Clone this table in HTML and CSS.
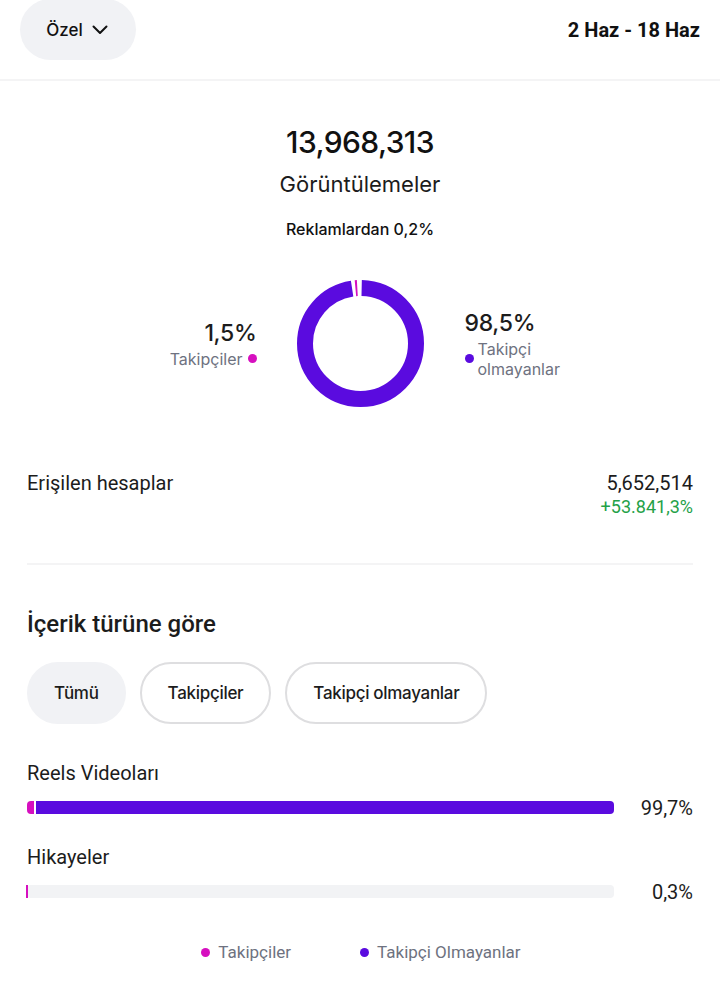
FILE: index.html
```html
<!DOCTYPE html>
<html lang="tr">
<head>
<meta charset="utf-8">
<link rel="stylesheet" href="styles.css">
</head>
<body>
<header class="topbar">
  <button class="range-pill">Özel
    <svg class="chev" width="16" height="10" viewBox="0 0 16 10"><path d="M1.5 1.5 L8 8 L14.5 1.5" fill="none" stroke="#111" stroke-width="2" stroke-linecap="round" stroke-linejoin="round"/></svg>
  </button>
  <div class="date-range">2 Haz - 18 Haz</div>
</header>

<main class="content">
  <section class="summary">
    <div class="big-number">13,968,313</div>
    <div class="big-label">Görüntülemeler</div>
    <div class="ads-note">Reklamlardan 0,2%</div>
  </section>

  <section class="donut-row">
    <div class="donut-side left">
      <div class="pct">1,5%</div>
      <div class="legend-line">Takipçiler <span class="dot pink"></span></div>
    </div>
    <svg class="donut" width="127" height="127" viewBox="0 0 127 127">
      <g transform="rotate(-90 63.5 63.5)">
        <circle cx="63.5" cy="63.5" r="55.5" fill="none" stroke="#5a0bdf" stroke-width="16" stroke-dasharray="338.5 1000" stroke-dashoffset="-1.2"/>
        <circle cx="63.5" cy="63.5" r="55.5" fill="none" stroke="#d60fbf" stroke-width="16" stroke-dasharray="1.9 1000" stroke-dashoffset="-343.0"/>
      </g>
    </svg>
    <div class="donut-side right">
      <div class="pct">98,5%</div>
      <div class="legend-line"><span class="dot purple"></span><span>Takipçi<br>olmayanlar</span></div>
    </div>
  </section>

  <section class="reach">
    <div class="reach-label">Erişilen hesaplar</div>
    <div class="reach-values">
      <div class="reach-num">5,652,514</div>
      <div class="reach-delta">+53.841,3%</div>
    </div>
  </section>

  <hr class="divider">

  <h2 class="section-title">İçerik türüne göre</h2>

  <div class="chips">
    <button class="chip active">Tümü</button>
    <button class="chip">Takipçiler</button>
    <button class="chip">Takipçi olmayanlar</button>
  </div>

  <section class="bars">
    <div class="bar-item">
      <div class="bar-name">Reels Videoları</div>
      <div class="bar-row">
        <div class="track">
          <div class="seg seg-pink" style="width:7px"></div>
          <div class="seg seg-purple" style="flex:1"></div>
        </div>
        <div class="bar-val">99,7%</div>
      </div>
    </div>
    <div class="bar-item">
      <div class="bar-name">Hikayeler</div>
      <div class="bar-row">
        <div class="track empty">
          <div class="seg seg-thin"></div>
        </div>
        <div class="bar-val">0,3%</div>
      </div>
    </div>
  </section>

  <div class="legend">
    <span class="legend-item"><span class="dot pink"></span>Takipçiler</span>
    <span class="legend-item"><span class="dot purple"></span>Takipçi Olmayanlar</span>
  </div>
</main>
</body>
</html>
```

FILE: styles.css
```css
* { box-sizing: border-box; }
html, body { margin: 0; padding: 0; background: #fff; }
body {
  font-family: Roboto, "Liberation Sans", sans-serif;
  color: #1c1c1c;
  width: 720px;
}

.topbar {
  height: 81px;
  border-bottom: 2px solid #f4f4f5;
  display: flex;
  justify-content: space-between;
  align-items: flex-start;
  padding: 0 20px 0 20px;
}
.range-pill {
  margin-top: -1px;
  width: 116px;
  height: 61px;
  border: none;
  border-radius: 31px;
  background: #f1f2f5;
  font-family: Inter, sans-serif;
  font-size: 17px;
  font-weight: 500;
  color: #111;
  display: flex;
  align-items: center;
  justify-content: center;
  gap: 9px;
  padding: 0 2px 0 0;
}
.chev { display: block; margin-top: 1px; }
.date-range {
  margin-top: 18px;
  font-family: Roboto, sans-serif;
  font-weight: 700;
  font-size: 20px;
  color: #111;
}

.content { padding: 0 27px; }

.summary { text-align: center; padding-top: 43px; }
.big-number {
  font-family: Inter, sans-serif;
  font-size: 30px;
  font-weight: 500;
  letter-spacing: -0.6px;
  line-height: 36px;
  color: #111;
}
.big-label {
  font-family: Inter, sans-serif;
  font-size: 22px;
  font-weight: 400;
  line-height: 30px;
  margin-top: 9px;
  color: #1c1c1c;
}
.ads-note {
  font-family: Inter, sans-serif;
  font-size: 16px;
  font-weight: 500;
  line-height: 22px;
  margin-top: 19px;
  color: #111;
}

.donut-row {
  margin-top: 40px;
  display: grid;
  grid-template-columns: 1fr auto 1fr;
  column-gap: 41px;
  align-items: center;
}
.donut { display: block; }
.donut-side { font-family: Inter, sans-serif; }
.donut-side.left { text-align: right; justify-self: end; margin-right: -1px; }
.donut-side.right { justify-self: start; margin-top: 0; }
.pct {
  font-size: 23px;
  font-weight: 500;
  color: #1c1c1c;
  line-height: 28px;
  letter-spacing: -0.3px;
}
.legend-line {
  font-size: 16px;
  color: #6e7280;
  line-height: 20px;
  display: flex;
  align-items: center;
  gap: 5px;
  margin-top: 2px;
}
.left .legend-line { justify-content: flex-end; }
.right .legend-line { gap: 4px; }
.dot {
  display: inline-block;
  width: 9px;
  height: 9px;
  border-radius: 50%;
  flex: none;
}
.dot.pink { background: #d60fbf; }
.dot.purple { background: #5a0bdf; }

.reach {
  margin-top: 63px;
  display: flex;
  justify-content: space-between;
  align-items: flex-start;
}
.reach-label { font-size: 20px; line-height: 26px; color: #1c1c1c; }
.reach-values { text-align: right; }
.reach-num { font-size: 20px; line-height: 26px; color: #1c1c1c; }
.reach-delta { font-size: 18px; line-height: 22px; color: #24a148; }

.divider {
  border: none;
  border-top: 2px solid #f4f4f5;
  margin: 45px 0 0 0;
}

.section-title {
  margin: 43px 0 0 0;
  font-size: 24px;
  font-weight: 500;
  line-height: 32px;
  color: #1c1c1c;
}

.chips {
  margin-top: 22px;
  display: flex;
  gap: 14px;
}
.chip {
  height: 62px;
  border-radius: 31px;
  border: 2px solid #dedee0;
  background: #fff;
  font-family: Inter, sans-serif;
  font-weight: 500;
  font-size: 17px;
  letter-spacing: -0.3px;
  color: #1c1c1c;
  padding: 0 26px;
}
.chip.active {
  background: #f1f2f5;
  border-color: #f1f2f5;
  padding: 0 25px;
}

.bars { margin-top: 36px; }
.bar-item + .bar-item { margin-top: 24px; }
.bar-name { font-size: 20px; line-height: 26px; color: #1c1c1c; }
.bar-row {
  margin-top: 8px;
  display: flex;
  align-items: center;
}
.track {
  width: 587px;
  height: 13px;
  display: flex;
  gap: 2px;
}
.track.empty {
  background: #f2f3f5;
  border-radius: 4px;
}
.seg { height: 100%; }
.seg-pink { background: #d60fbf; border-radius: 4px 0 0 4px; }
.seg-purple { background: #5a0bdf; border-radius: 0 4px 4px 0; }
.seg-thin { width: 2px; background: #d60fbf; margin-left: -1px; }
.bar-val {
  flex: 1;
  text-align: right;
  font-size: 20px;
  color: #1c1c1c;
  margin-top: 2px;
}

.legend {
  margin-top: 38px;
  display: flex;
  justify-content: center;
  gap: 69px;
  padding-left: 2px;
}
.legend-item {
  display: flex;
  align-items: center;
  gap: 8px;
  font-size: 17px;
  color: #6e7280;
}
```
